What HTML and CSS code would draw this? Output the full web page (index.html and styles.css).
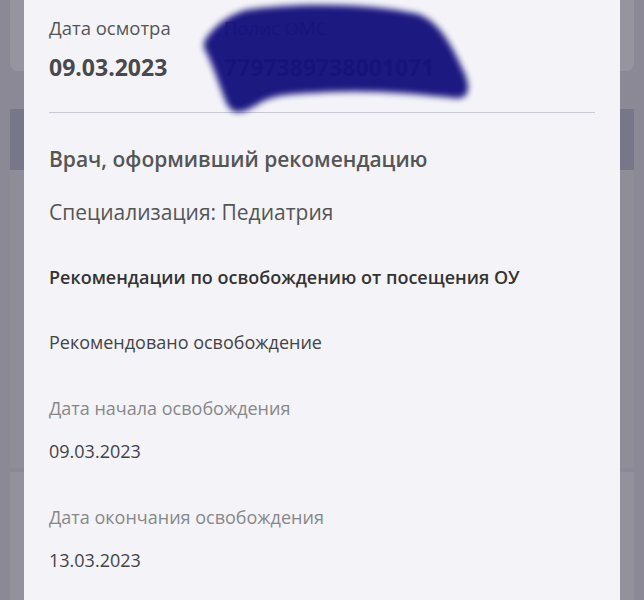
FILE: index.html
```html
<!DOCTYPE html>
<html lang="ru">
<head>
  <meta charset="UTF-8">
  <title>Рекомендация</title>
  <link rel="stylesheet" href="styles.css">
</head>
<body>
  <div class="backdrop">
    <div class="bg-card bg-top"></div>
    <div class="bg-card bg-dark"></div>
    <div class="bg-card bg-mid"></div>
    <div class="bg-card bg-low"></div>
  </div>

  <div class="modal">
    <div class="head-row">
      <div class="head-col">
        <div class="label">Дата осмотра</div>
        <div class="value-strong">09.03.2023</div>
      </div>
      <div class="head-col">
        <div class="label">Полис ОМС</div>
        <div class="value-strong">7797389738001071</div>
      </div>
      <svg class="scribble" width="300" height="124" viewBox="0 0 300 124">
        <path d="M22 44 C30 30 44 18 64 12 C120 4 190 6 236 16 C258 24 270 48 282 74 C290 92 286 102 272 100 C236 96 190 92 150 94 C110 96 92 96 76 106 C60 116 50 118 44 104 C36 84 30 64 22 50 Z" fill="#16127e"/>
      </svg>
    </div>
    <hr class="divider">

    <div class="doctor">Врач, оформивший рекомендацию</div>
    <div class="spec">Специализация: Педиатрия</div>

    <div class="section-title">Рекомендации по освобождению от посещения ОУ</div>
    <div class="text">Рекомендовано освобождение</div>

    <div class="field">
      <div class="field-label">Дата начала освобождения</div>
      <div class="text">09.03.2023</div>
    </div>
    <div class="field">
      <div class="field-label">Дата окончания освобождения</div>
      <div class="text">13.03.2023</div>
    </div>
  </div>
</body>
</html>
```

FILE: styles.css
```css
body {
  margin: 0;
  background: #8a8995;
  font-family: "Open Sans", "Noto Sans", sans-serif;
  height: 600px;
  overflow: hidden;
}
.backdrop {
  padding: 0 10px;
}
.bg-card {
  background: #8f8e99;
}
.bg-top {
  height: 71px;
  background: #96959f;
  border-radius: 0 0 8px 8px;
  margin-bottom: 38px;
}
.bg-dark {
  height: 61px;
  background: #787789;
}
.bg-mid {
  height: 298px;
  background: #8e8d98;
  margin-bottom: 4px;
}
.bg-low {
  height: 200px;
  background: #93929c;
}
.modal {
  position: absolute;
  left: 24px;
  top: 0;
  width: 596px;
  height: 600px;
  overflow: hidden;
  background: #f3f3f8;
  padding: 16px 25px 0;
  box-sizing: border-box;
  color: #444;
}
.head-row {
  position: relative;
  display: flex;
}
.head-col {
  width: 175px;
}
.label {
  font-size: 18.5px;
  line-height: 24px;
  color: #555;
}
.value-strong {
  margin-top: 13px;
  font-size: 23px;
  line-height: 28px;
  font-weight: 700;
  color: #48484d;
}
.scribble {
  position: absolute;
  left: 133px;
  top: -18px;
  filter: blur(3px);
  opacity: 0.97;
}
.divider {
  border: 0;
  border-top: 1px solid #c9c8d6;
  margin: 31px 0 0;
}
.doctor {
  margin-top: 32px;
  font-size: 21px;
  line-height: 28px;
  font-weight: 600;
  color: #555;
}
.spec {
  margin-top: 25px;
  font-size: 21px;
  line-height: 28px;
  color: #555;
}
.section-title {
  margin-top: 39px;
  font-size: 18px;
  line-height: 24px;
  font-weight: 600;
  color: #333;
}
.text {
  font-size: 18px;
  line-height: 24px;
  color: #444;
}
.section-title + .text {
  margin-top: 41px;
}
.field {
  margin-top: 42px;
}
.field-label {
  font-size: 18px;
  line-height: 24px;
  color: #888;
  margin-bottom: 19px;
}
.field + .field {
  margin-top: 42px;
}
```
